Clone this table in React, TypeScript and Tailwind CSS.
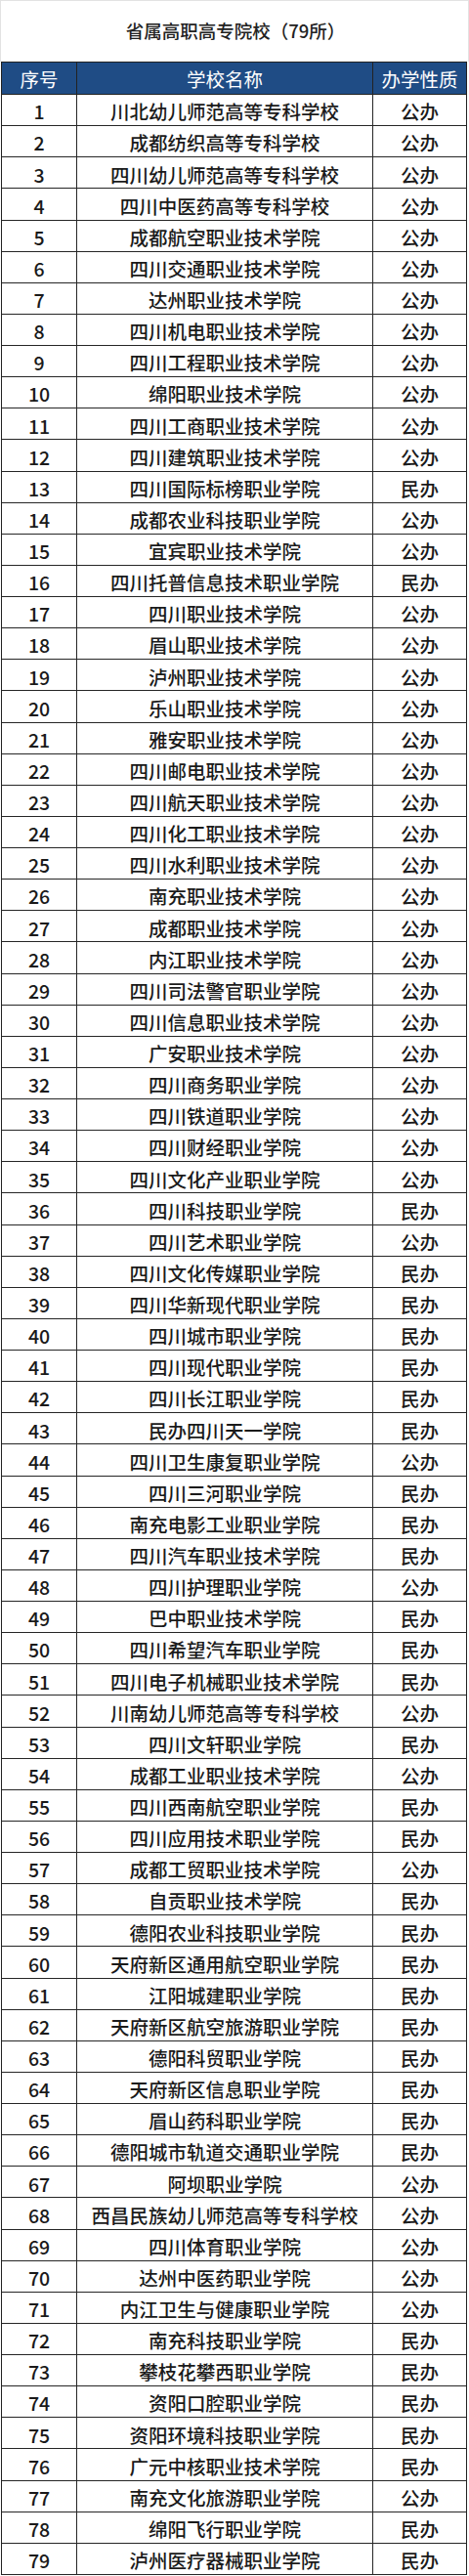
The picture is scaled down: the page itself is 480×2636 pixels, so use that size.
import React from "react"

const schools: [string, string][] = [
  ["川北幼儿师范高等专科学校", "公办"],
  ["成都纺织高等专科学校", "公办"],
  ["四川幼儿师范高等专科学校", "公办"],
  ["四川中医药高等专科学校", "公办"],
  ["成都航空职业技术学院", "公办"],
  ["四川交通职业技术学院", "公办"],
  ["达州职业技术学院", "公办"],
  ["四川机电职业技术学院", "公办"],
  ["四川工程职业技术学院", "公办"],
  ["绵阳职业技术学院", "公办"],
  ["四川工商职业技术学院", "公办"],
  ["四川建筑职业技术学院", "公办"],
  ["四川国际标榜职业学院", "民办"],
  ["成都农业科技职业学院", "公办"],
  ["宜宾职业技术学院", "公办"],
  ["四川托普信息技术职业学院", "民办"],
  ["四川职业技术学院", "公办"],
  ["眉山职业技术学院", "公办"],
  ["泸州职业技术学院", "公办"],
  ["乐山职业技术学院", "公办"],
  ["雅安职业技术学院", "公办"],
  ["四川邮电职业技术学院", "公办"],
  ["四川航天职业技术学院", "公办"],
  ["四川化工职业技术学院", "公办"],
  ["四川水利职业技术学院", "公办"],
  ["南充职业技术学院", "公办"],
  ["成都职业技术学院", "公办"],
  ["内江职业技术学院", "公办"],
  ["四川司法警官职业学院", "公办"],
  ["四川信息职业技术学院", "公办"],
  ["广安职业技术学院", "公办"],
  ["四川商务职业学院", "公办"],
  ["四川铁道职业学院", "公办"],
  ["四川财经职业学院", "公办"],
  ["四川文化产业职业学院", "公办"],
  ["四川科技职业学院", "民办"],
  ["四川艺术职业学院", "公办"],
  ["四川文化传媒职业学院", "民办"],
  ["四川华新现代职业学院", "民办"],
  ["四川城市职业学院", "民办"],
  ["四川现代职业学院", "民办"],
  ["四川长江职业学院", "民办"],
  ["民办四川天一学院", "民办"],
  ["四川卫生康复职业学院", "公办"],
  ["四川三河职业学院", "民办"],
  ["南充电影工业职业学院", "民办"],
  ["四川汽车职业技术学院", "民办"],
  ["四川护理职业学院", "公办"],
  ["巴中职业技术学院", "民办"],
  ["四川希望汽车职业学院", "民办"],
  ["四川电子机械职业技术学院", "民办"],
  ["川南幼儿师范高等专科学校", "公办"],
  ["四川文轩职业学院", "民办"],
  ["成都工业职业技术学院", "公办"],
  ["四川西南航空职业学院", "民办"],
  ["四川应用技术职业学院", "民办"],
  ["成都工贸职业技术学院", "公办"],
  ["自贡职业技术学院", "民办"],
  ["德阳农业科技职业学院", "民办"],
  ["天府新区通用航空职业学院", "民办"],
  ["江阳城建职业学院", "民办"],
  ["天府新区航空旅游职业学院", "民办"],
  ["德阳科贸职业学院", "民办"],
  ["天府新区信息职业学院", "民办"],
  ["眉山药科职业学院", "民办"],
  ["德阳城市轨道交通职业学院", "民办"],
  ["阿坝职业学院", "公办"],
  ["西昌民族幼儿师范高等专科学校", "公办"],
  ["四川体育职业学院", "公办"],
  ["达州中医药职业学院", "公办"],
  ["内江卫生与健康职业学院", "公办"],
  ["南充科技职业学院", "民办"],
  ["攀枝花攀西职业学院", "民办"],
  ["资阳口腔职业学院", "民办"],
  ["资阳环境科技职业学院", "民办"],
  ["广元中核职业技术学院", "民办"],
  ["南充文化旅游职业学院", "公办"],
  ["绵阳飞行职业学院", "民办"],
  ["泸州医疗器械职业学院", "民办"],
]

export default function App() {
  return (
    <div
      className="w-[480px] bg-white text-[#1a1a1a]"
      style={{ fontFamily: '"Noto Sans CJK SC", "Noto Sans", sans-serif' }}
    >
      <div className="flex h-[63px] items-center justify-center border-x border-t border-[#e2e2e2] pl-[2px] text-[18.5px] font-medium text-[#222]">
        省属高职高专院校（79所）
      </div>

      <div className="ml-[1px] mr-[2px] border-x border-[#222]">
        {/* header */}
        <div className="grid h-[34px] grid-cols-[77px_303px_1fr] border-y border-[#222] bg-[#1f4c85] text-[19.5px] leading-none text-white">
          <div className="flex items-center justify-center border-r border-[#222] pt-[1px]">序号</div>
          <div className="flex items-center justify-center border-r border-[#222] pt-[1px]">学校名称</div>
          <div className="flex items-center justify-center pt-[1px]">办学性质</div>
        </div>

        {schools.map(([name, type], i) => (
          <div
            key={i}
            className="grid h-[32.13px] grid-cols-[77px_303px_1fr] border-b border-[#262626] text-[19.5px] font-medium leading-none"
          >
            <div className="flex items-center justify-center border-r border-[#262626] pt-[3px]">{i + 1}</div>
            <div className="flex items-center justify-center border-r border-[#262626] pt-[3px]">{name}</div>
            <div className="flex items-center justify-center pt-[3px]">{type}</div>
          </div>
        ))}
      </div>
    </div>
  )
}
